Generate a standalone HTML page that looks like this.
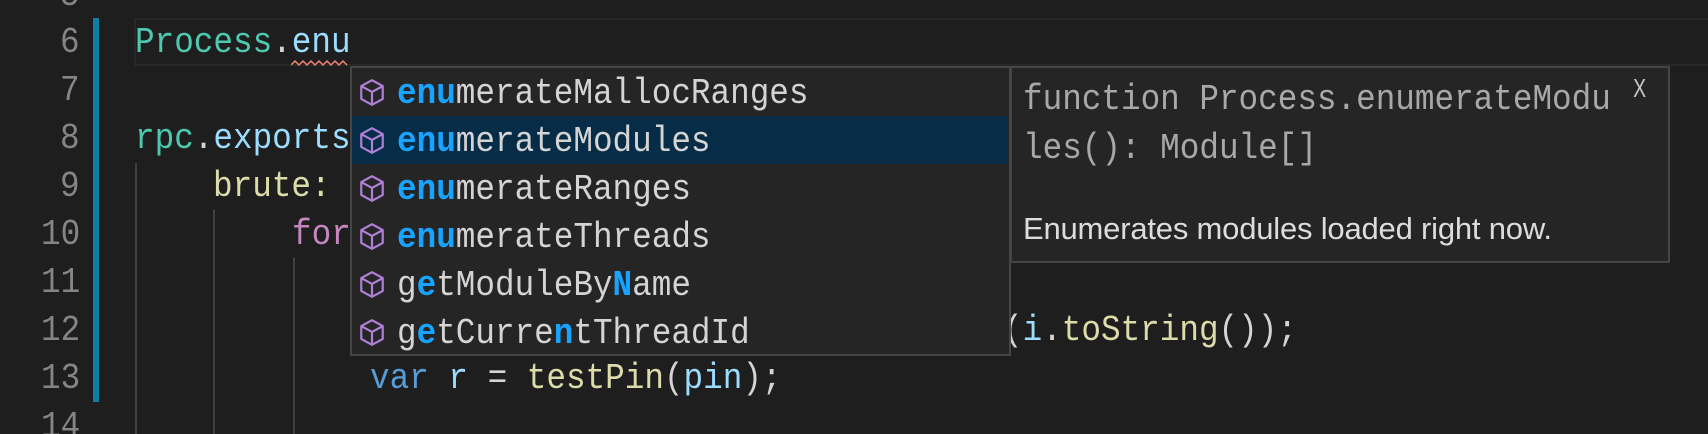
<!DOCTYPE html>
<html><head><meta charset="utf-8"><style>
html,body{margin:0;padding:0;background:#1e1e1e;width:1708px;height:434px;overflow:hidden;position:relative}
.m{font-family:"Liberation Mono",monospace;font-size:36px;white-space:pre;position:absolute;line-height:48px;transform:scaleX(.907);transform-origin:0 50%;margin-top:2px}
.ln{color:#858585;right:1628px;text-align:right;transform-origin:100% 50%}
.g{position:absolute;width:2px;background:#404040}
.row{position:absolute;left:323px;width:686px;height:48px}
.row .m{left:74px;top:0;color:#d4d4d4}
.h{color:#18a3ff;font-weight:bold}
.row svg{position:absolute;left:35px;top:10px}
</style></head><body>
<div class="m ln" style="top:-30px">5</div>
<div class="m ln" style="top:17px">6</div>
<div class="m ln" style="top:65px">7</div>
<div class="m ln" style="top:113px">8</div>
<div class="m ln" style="top:161px">9</div>
<div class="m ln" style="top:209px">10</div>
<div class="m ln" style="top:257px">11</div>
<div class="m ln" style="top:305px">12</div>
<div class="m ln" style="top:353px">13</div>
<div class="m ln" style="top:401px">14</div>
<div style="position:absolute;left:93px;top:18px;width:6px;height:384px;background:#0e7fa0"></div>
<div style="position:absolute;left:134px;top:18px;width:1600px;height:44px;border:2px solid #282828"></div>
<div class="g" style="left:135px;top:163px;height:280px"></div>
<div class="g" style="left:213px;top:210px;height:230px"></div>
<div class="g" style="left:293px;top:258px;height:180px"></div>
<div class="m" style="left:135px;top:17px"><span style="color:#4ec9b0">Process</span><span style="color:#d4d4d4">.</span><span style="color:#9cdcfe">enu</span></div>
<svg style="position:absolute;left:291px;top:59px" width="60" height="8"><path d="M0 6 L4 2 L8 6 L12 2 L16 6 L20 2 L24 6 L28 2 L32 6 L36 2 L40 6 L44 2 L48 6 L52 2 L56 6" stroke="#f48771" stroke-width="1.5" fill="none"/></svg>
<div class="m" style="left:135px;top:113px"><span style="color:#4ec9b0">rpc</span><span style="color:#d4d4d4">.</span><span style="color:#9cdcfe">exports</span></div>
<div class="m" style="left:213px;top:161px;color:#dcdcaa">brute:</div>
<div class="m" style="left:292px;top:209px;color:#c586c0">for</div>
<div class="m" style="left:1003px;top:305px;color:#d4d4d4">(<span style="color:#9cdcfe">i</span>.<span style="color:#dcdcaa">toString</span>());</div>
<div class="m" style="left:370px;top:353px;color:#d4d4d4"><span style="color:#569cd6">var</span> <span style="color:#9cdcfe">r</span> = <span style="color:#dcdcaa">testPin</span>(<span style="color:#9cdcfe">pin</span>);</div>

<div style="position:absolute;left:350px;top:66px;width:657px;height:286px;background:#252526;border:2px solid #454545"></div>
<div class="row" style="top:68px"><svg width="28" height="29" viewBox="0 0 26 27"><path d="M13 2 L23 7.5 L23 19.5 L13 25 L3 19.5 L3 7.5 Z M3 7.5 L13 13 L23 7.5 M13 13 L13 25" stroke="#b180d7" stroke-width="2" fill="none" stroke-linejoin="round"/></svg><div class="m"><span class="h">enu</span>merateMallocRanges</div></div>
<div class="row" style="top:116px;background:#062c47;left:352px;width:655px"><svg style="left:6px" width="28" height="29" viewBox="0 0 26 27"><path d="M13 2 L23 7.5 L23 19.5 L13 25 L3 19.5 L3 7.5 Z M3 7.5 L13 13 L23 7.5 M13 13 L13 25" stroke="#b180d7" stroke-width="2" fill="none" stroke-linejoin="round"/></svg><div class="m" style="left:45px"><span class="h">enu</span>merateModules</div></div>
<div class="row" style="top:164px"><svg width="28" height="29" viewBox="0 0 26 27"><path d="M13 2 L23 7.5 L23 19.5 L13 25 L3 19.5 L3 7.5 Z M3 7.5 L13 13 L23 7.5 M13 13 L13 25" stroke="#b180d7" stroke-width="2" fill="none" stroke-linejoin="round"/></svg><div class="m"><span class="h">enu</span>merateRanges</div></div>
<div class="row" style="top:212px"><svg width="28" height="29" viewBox="0 0 26 27"><path d="M13 2 L23 7.5 L23 19.5 L13 25 L3 19.5 L3 7.5 Z M3 7.5 L13 13 L23 7.5 M13 13 L13 25" stroke="#b180d7" stroke-width="2" fill="none" stroke-linejoin="round"/></svg><div class="m"><span class="h">enu</span>merateThreads</div></div>
<div class="row" style="top:260px"><svg width="28" height="29" viewBox="0 0 26 27"><path d="M13 2 L23 7.5 L23 19.5 L13 25 L3 19.5 L3 7.5 Z M3 7.5 L13 13 L23 7.5 M13 13 L13 25" stroke="#b180d7" stroke-width="2" fill="none" stroke-linejoin="round"/></svg><div class="m">g<span class="h">e</span>tModuleBy<span class="h">N</span>ame</div></div>
<div class="row" style="top:308px"><svg width="28" height="29" viewBox="0 0 26 27"><path d="M13 2 L23 7.5 L23 19.5 L13 25 L3 19.5 L3 7.5 Z M3 7.5 L13 13 L23 7.5 M13 13 L13 25" stroke="#b180d7" stroke-width="2" fill="none" stroke-linejoin="round"/></svg><div class="m">g<span class="h">e</span>tCurre<span class="h">n</span>tThreadId</div></div>

<div style="position:absolute;left:1010px;top:66px;width:656px;height:193px;background:#252526;border:2px solid #454545"></div>
<div class="m" style="left:1023px;top:74px;color:#a8a8a8">function Process.enumerateModu</div>
<div class="m" style="left:1023px;top:123px;color:#a8a8a8">les(): Module[]</div>
<div style="position:absolute;left:1023px;top:211px;font-family:'Liberation Sans',sans-serif;font-size:31px;color:#dcdcdc;letter-spacing:-0.2px">Enumerates modules loaded right now.</div>
<div style="position:absolute;left:1631px;top:73px;font-family:'Liberation Sans',sans-serif;font-size:26px;color:#c8c8c8;transform:scaleX(.75)">X</div>
</body></html>
